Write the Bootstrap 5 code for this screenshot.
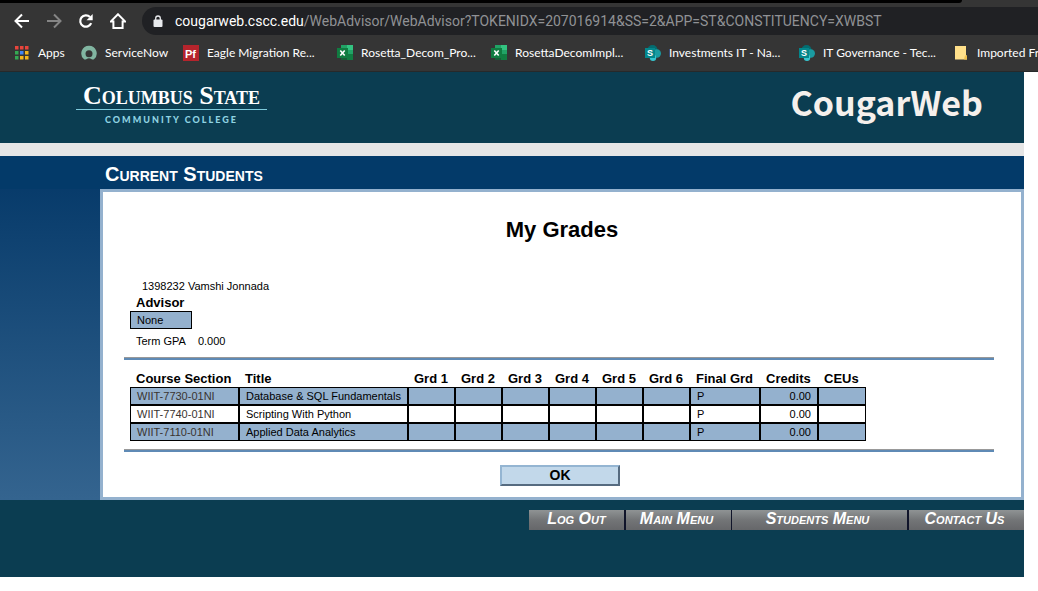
<!DOCTYPE html>
<html lang="en">
<head>
<meta charset="utf-8">
<meta name="viewport" content="width=device-width, initial-scale=1">
<title>My Grades</title>
<link href="https://cdn.jsdelivr.net/npm/bootstrap@5.3.0/dist/css/bootstrap.min.css" rel="stylesheet">
<style>
body { font-family: "Liberation Sans", Arial, sans-serif; color: #000; background: #fff; font-size: 11px; line-height: 16px; }
/* browser chrome */
.browser { background: #353535; font-family: Lato, "Open Sans", sans-serif; border-bottom: 1px solid #27292a; }
.tabstrip { background: #000; height: 3px; margin-right: 76px; border-bottom-right-radius: 3px; }
.toolbar { padding: 4px 0 1px 14px; }
.tool { width: 16px; height: 28px; padding: 0; border: 0; background: none; color: #fff; margin-right: 16px; display: flex; align-items: center; }
.tool:disabled { color: #858585; }
.omnibox { background: #202124; border-radius: 14px 0 0 14px; height: 28px; padding-left: 11px; color: #909295; font-family: Roboto, sans-serif; font-size: 14px; }
.omnibox b { color: #fff; font-weight: 400; }
.bookmarks { padding: 0 0 2px 13px; height: 35px; }
.bookmarks a { color: #fff; font-size: 12px; gap: 8px; flex: none; text-decoration: none; white-space: nowrap; }
.bookmarks svg { flex: none; }
.bm-apps { width: 68px; }
.bm-short { width: 102px; }
.bm-long { width: 154px; }
/* site */
.site { margin-right: 14px; }
.masthead { background: #0b3d51; height: 71px; padding: 0 41px 8px 76px; }
.crest { width: 191px; text-align: center; color: #fff; padding-top: 4px; }
.crest-top { font-family: "Liberation Serif", serif; font-variant: small-caps; font-weight: 700; font-size: 26px; line-height: 27px; border-bottom: 1px solid #7fcbdc; }
.crest-sub { font-family: Lato, sans-serif; font-weight: 900; font-size: 9px; letter-spacing: 2px; line-height: 20px; color: #8fd3e2; }
.product { font-family: "Noto Sans CJK SC", "Noto Sans", sans-serif; font-weight: 700; font-size: 34px; line-height: 36px; padding-bottom: 4px; color: #f5f0ec; }
.band { background: #e6e6e6; height: 13px; }
.stage { background: linear-gradient(#033767, #34648f); padding-left: 100px; }
.stage-head { background: #033a69; margin-left: -100px; padding: 8px 0 0 105px; height: 33px; color: #fff; font-size: 20px; line-height: 20px; font-variant: small-caps; font-weight: 700; }
.panel { background: #fff; border: 3px solid #94b1ce; padding: 26px 27px 11px 21px; }
.panel h1 { font-size: 22px; line-height: 24px; font-weight: 700; margin: 0 0 36px; padding-left: 6px; }
.details { padding: 0 6px; }
.label-lg { font-size: 13px; line-height: 17px; font-weight: 700; padding-left: 6px; }
.advisor { border: 1px solid #000; background: #94b1ce; width: 62px; height: 18px; padding-left: 6px; }
.term { padding: 4px 6px 8px; gap: 12px; }
.rule { height: 3px; margin: 0; border: 0; opacity: 1; background: #5f8ab5; border-top: 1px solid #999; }
.grades { border-collapse: separate; border-spacing: 0; margin: 11px 6px 8px; }
.grades th { font-size: 13px; line-height: 16px; padding: 0 6px; white-space: nowrap; }
.grades td { border: 1px solid #000; line-height: 16px; height: 18px; padding: 0 6px; white-space: nowrap; }
.grades tbody tr:nth-child(odd) td { background: #94b1ce; }
.code { color: #3a3430; }
.c-sec { width: 109px; } .c-title { width: 169px; } .c-grd { width: 47px; } .c-final { width: 70px; } .c-cred { width: 58px; } .c-ceu { width: 48px; }
.actions { padding: 13px 0 0 2px; }
.ok { width: 120px; height: 21px; padding: 0; border: 2px solid; border-color: #94b5d2 #566b80 #566b80 #94b5d2; background: #c2d8ea; color: #000; font-size: 14px; line-height: 17px; font-weight: 700; }
.foot { background: #0b3d51; height: 77px; padding-top: 10px; }
.foot-menu { background: #10142a; height: 20px; }
.foot-menu a { background: linear-gradient(#8f9394, #737577 50%, #66676a); color: #fff; font-size: 16px; line-height: 17px; font-style: italic; font-weight: 700; font-variant: small-caps; text-align: center; text-decoration: none; height: 20px; white-space: nowrap; }
.f-log { width: 95px; margin-right: 2px; } .f-main { width: 105px; margin-right: 1px; padding-right: 4px; } .f-stud { width: 175px; margin-right: 2px; padding-right: 4px; } .f-cont { width: 115px; padding-right: 4px; }
</style>
</head>
<body class="overflow-x-hidden">
<header class="browser overflow-hidden">
  <div class="tabstrip"></div>
  <div class="toolbar d-flex align-items-center">
    <button class="tool" aria-label="Back"><svg width="16" height="16" viewBox="0 0 16 16" fill="none" stroke="currentColor" stroke-width="2"><path d="M15 8H2M8 1.5 1.5 8 8 14.5"/></svg></button>
    <button class="tool" aria-label="Forward" disabled><svg width="16" height="16" viewBox="0 0 16 16" fill="none" stroke="currentColor" stroke-width="2"><path d="M1 8h13M8 1.5 14.5 8 8 14.5"/></svg></button>
    <button class="tool" aria-label="Reload"><svg width="16" height="16" viewBox="0 0 16 16"><path d="M13.2 10.2A5.7 5.7 0 1 1 12 4" fill="none" stroke="currentColor" stroke-width="2.2"/><path d="M14.7 1v6.2H8.5z" fill="currentColor"/></svg></button>
    <button class="tool" aria-label="Home"><svg width="16" height="16" viewBox="0 0 16 16" fill="none" stroke="currentColor" stroke-width="2"><path d="M8 1.3.9 8.4H3.400V15h9.200V8.400h2.500z"/></svg></button>
    <div class="omnibox flex-grow-1 d-flex align-items-center text-nowrap">
      <svg width="10" height="13" viewBox="0 0 10 13" class="me-2"><rect x="0.500" y="4.500" width="9" height="7.500" rx="1" fill="#e8eaed"/><path d="M2.700 5V3.300a2.300 2.300 0 0 1 4.600 0V5" fill="none" stroke="#e8eaed" stroke-width="1.300"/></svg>
      <span class="ms-1"><b>cougarweb.cscc.edu</b>/WebAdvisor/WebAdvisor?TOKENIDX=207016914&amp;SS=2&amp;APP=ST&amp;CONSTITUENCY=XWBST</span>
    </div>
  </div>
  <nav class="bookmarks d-flex align-items-center" aria-label="Bookmarks">
    <a class="bm-apps d-flex align-items-center" href="#"><svg width="17" height="16" viewBox="0 0 17 16"><path d="M2 1h3.500v3.500H2zM7 1h3.500v3.500H7zM12 1h3.500v3.500H12z" fill="#e8453c"/><path d="M2 6h3.500v3.500H2zM2 11h3.500v3.500H2z" fill="#34a853"/><path d="M7 6h3.500v3.500H7z" fill="#4285f4"/><path d="M12 6h3.500v3.500H12zM12 11h3.500v3.500H12zM7 11h3.500v3.500H7z" fill="#f5b51c"/></svg>Apps</a>
    <a class="bm-short d-flex align-items-center" href="#"><svg width="16" height="16" viewBox="0 0 16 16"><path d="M8 .8a7.600 7.600 0 0 0-5.200 13.200c.7.700 1.700.7 2.500.2a4.800 4.800 0 0 1 5.400 0c.8.500 1.800.5 2.500-.2A7.600 7.600 0 0 0 8 .8z" fill="#81b5a1"/><circle cx="8" cy="8.700" r="3.500" fill="#353535"/></svg>ServiceNow</a>
    <a class="bm-long d-flex align-items-center" href="#"><svg width="16" height="16" viewBox="0 0 16 16"><path d="M0 0h16v16H0z" fill="#b5242c"/><text x="2" y="12.500" font-family="Liberation Sans" font-size="11" font-weight="700" fill="#fff">Pf</text></svg>Eagle Migration Re...</a>
    <a class="bm-long d-flex align-items-center" href="#"><svg width="16" height="16" viewBox="0 0 16 16"><path d="M4 0h12v15H4z" fill="#21a366"/><path d="M10 0h6v5h-6z" fill="#33c481"/><path d="M10 9h6v6h-6z" fill="#107c41"/><path d="M4 9h6v6H4z" fill="#185c37"/><path d="M0 3h11v10H0z" fill="#107c41"/><path d="m3.300 5.500 4.400 5M7.700 5.500l-4.400 5" stroke="#fff" stroke-width="1.600"/></svg>Rosetta_Decom_Pro...</a>
    <a class="bm-long d-flex align-items-center" href="#"><svg width="16" height="16" viewBox="0 0 16 16"><path d="M4 0h12v15H4z" fill="#21a366"/><path d="M10 0h6v5h-6z" fill="#33c481"/><path d="M10 9h6v6h-6z" fill="#107c41"/><path d="M4 9h6v6H4z" fill="#185c37"/><path d="M0 3h11v10H0z" fill="#107c41"/><path d="m3.300 5.500 4.400 5M7.700 5.500l-4.400 5" stroke="#fff" stroke-width="1.600"/></svg>RosettaDecomImpl...</a>
    <a class="bm-long d-flex align-items-center" href="#"><svg width="16" height="16" viewBox="0 0 16 16"><circle cx="7.500" cy="5" r="5" fill="#036c70"/><circle cx="11.800" cy="8.500" r="4.200" fill="#1a9ba1"/><circle cx="8" cy="12.700" r="3.200" fill="#37c6d0"/><path d="M0 3h10v10H0z" fill="#04868b"/><text x="2" y="11" font-family="Liberation Sans" font-size="9" font-weight="700" fill="#fff">S</text></svg>Investments IT - Na...</a>
    <a class="bm-long d-flex align-items-center" href="#"><svg width="16" height="16" viewBox="0 0 16 16"><circle cx="7.500" cy="5" r="5" fill="#036c70"/><circle cx="11.800" cy="8.500" r="4.200" fill="#1a9ba1"/><circle cx="8" cy="12.700" r="3.200" fill="#37c6d0"/><path d="M0 3h10v10H0z" fill="#04868b"/><text x="2" y="11" font-family="Liberation Sans" font-size="9" font-weight="700" fill="#fff">S</text></svg>IT Governance - Tec...</a>
    <a class="d-flex align-items-center" href="#"><svg width="16" height="16" viewBox="0 0 16 16"><path d="M2 1h11v9.500h1V14.500H2z" fill="#ffe08a"/><path d="M12 10.500h2v4h-3z" fill="#f0c04c"/></svg>Imported Fr</a>
  </nav>
</header>

<div class="site">
  <header class="masthead d-flex justify-content-between align-items-center">
    <div class="crest">
      <div class="crest-top text-nowrap">Columbus State</div>
      <div class="crest-sub text-nowrap">COMMUNITY COLLEGE</div>
    </div>
    <div class="product">CougarWeb</div>
  </header>
  <div class="band"></div>
  <main class="stage">
    <div class="stage-head">Current Students</div>
    <section class="panel">
      <h1 class="text-center">My Grades</h1>
      <div class="details">
        <div class="ps-2 ms-1">1398232 Vamshi Jonnada</div>
        <div class="label-lg">Advisor</div>
        <div class="advisor">None</div>
        <div class="term d-flex"><span>Term GPA</span><span>0.000</span></div>
      </div>
      <hr class="rule">
      <table class="grades">
        <thead>
          <tr><th class="c-sec">Course Section</th><th class="c-title">Title</th><th class="c-grd">Grd 1</th><th class="c-grd">Grd 2</th><th class="c-grd">Grd 3</th><th class="c-grd">Grd 4</th><th class="c-grd">Grd 5</th><th class="c-grd">Grd 6</th><th class="c-final">Final Grd</th><th class="c-cred">Credits</th><th class="c-ceu">CEUs</th></tr>
        </thead>
        <tbody>
          <tr><td class="code">WIIT-7730-01NI</td><td>Database &amp; SQL Fundamentals</td><td></td><td></td><td></td><td></td><td></td><td></td><td>P</td><td class="text-end">0.00</td><td></td></tr>
          <tr><td class="code">WIIT-7740-01NI</td><td>Scripting With Python</td><td></td><td></td><td></td><td></td><td></td><td></td><td>P</td><td class="text-end">0.00</td><td></td></tr>
          <tr><td class="code">WIIT-7110-01NI</td><td>Applied Data Analytics</td><td></td><td></td><td></td><td></td><td></td><td></td><td>P</td><td class="text-end">0.00</td><td></td></tr>
        </tbody>
      </table>
      <hr class="rule">
      <div class="actions text-center"><button class="ok">OK</button></div>
    </section>
  </main>
  <footer class="foot d-flex justify-content-end align-items-start">
    <nav class="foot-menu d-flex" aria-label="Site menu">
      <a class="f-log" href="#">Log Out</a><a class="f-main" href="#">Main Menu</a><a class="f-stud" href="#">Students Menu</a><a class="f-cont" href="#">Contact Us</a>
    </nav>
  </footer>
</div>
<script src="https://cdn.jsdelivr.net/npm/bootstrap@5.3.0/dist/js/bootstrap.bundle.min.js"></script>
</body>
</html>
